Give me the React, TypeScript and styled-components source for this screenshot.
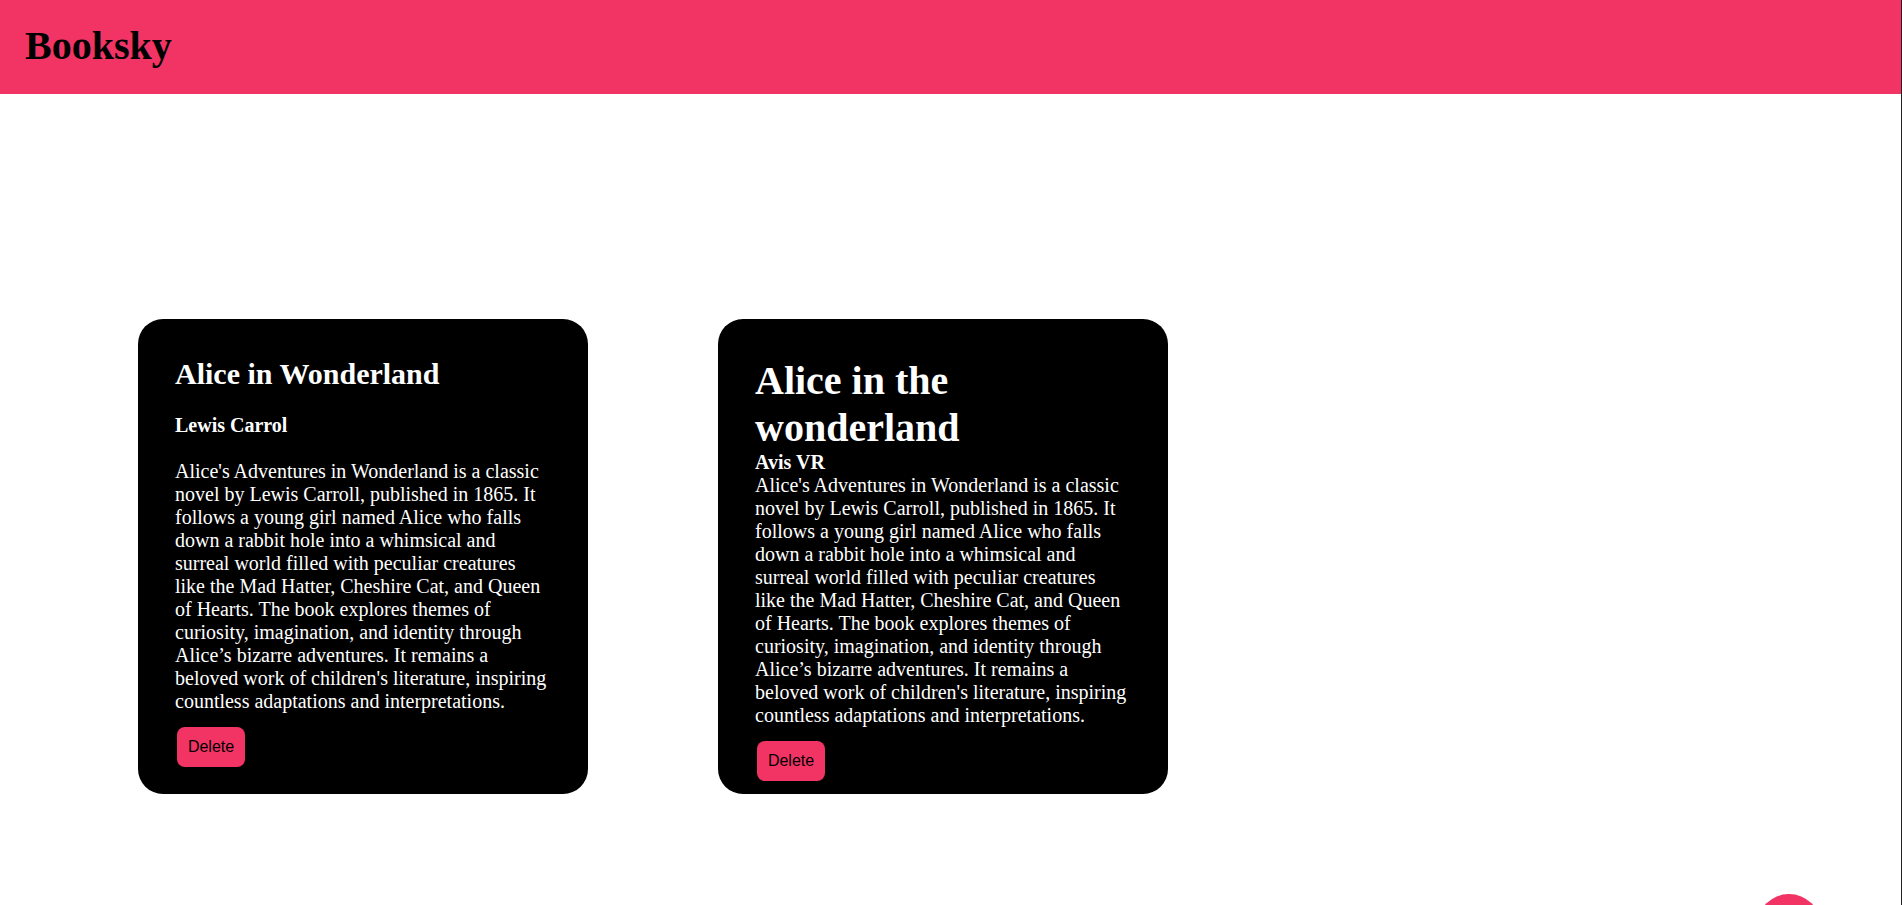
import React from "react";
import styled, { createGlobalStyle } from "styled-components";

const pink = "#f23465";

const GlobalStyle = createGlobalStyle`
  * { box-sizing: border-box; }
  body {
    margin: 0;
    background: #ffffff;
    font-family: "Liberation Serif", "Times New Roman", serif;
    font-size: 20px;
    line-height: 23px;
  }
`;

const Page = styled.div`
  min-height: 100vh;
  border-right: 1px solid #222222;
`;

const Header = styled.header`
  padding: 22px 25px 25px;
  background: ${pink};
  color: #000000;
`;

const Brand = styled.h1`
  margin: 0;
  font-size: 40px;
  line-height: 47px;
`;

const BookList = styled.main`
  display: flex;
  flex-wrap: wrap;
  gap: 130px;
  padding: 225px 138px 0;
`;

const Card = styled.article<{ $gap: number }>`
  display: flex;
  flex-direction: column;
  align-items: flex-start;
  gap: ${({ $gap }) => $gap}px;
  width: 450px;
  min-height: 475px;
  padding: 38px 40px 13px 37px;
  border-radius: 25px;
  background: #000000;
  color: #ffffff;
`;

const Title = styled.h2<{ $large?: boolean }>`
  margin: 0;
  font-size: ${({ $large }) => ($large ? 40 : 30)}px;
  line-height: ${({ $large }) => ($large ? 47 : 34)}px;
`;

const Author = styled.h3`
  margin: 0;
  font-size: 20px;
`;

const Summary = styled.p`
  margin: 0;
`;

const Body = styled.div`
  display: flex;
  flex-direction: column;
  align-items: flex-start;
  gap: 14px;
`;

const DeleteButton = styled.button`
  min-width: 68px;
  height: 40px;
  margin: 0 2px;
  padding: 0 10px;
  border: 0;
  border-radius: 8px;
  background: ${pink};
  color: #000000;
  font-family: "Liberation Sans", Arial, sans-serif;
  font-size: 16px;
  cursor: pointer;
`;

const AddButton = styled.button`
  position: fixed;
  right: 81px;
  bottom: -53px;
  width: 64px;
  height: 64px;
  border: 0;
  border-radius: 50%;
  background: ${pink};
  cursor: pointer;
`;

const summary =
  "Alice's Adventures in Wonderland is a classic novel by Lewis Carroll, published in 1865. It follows a young girl named Alice who falls down a rabbit hole into a whimsical and surreal world filled with peculiar creatures like the Mad Hatter, Cheshire Cat, and Queen of Hearts. The book explores themes of curiosity, imagination, and identity through Alice’s bizarre adventures. It remains a beloved work of children's literature, inspiring countless adaptations and interpretations.";

const books = [
  { title: "Alice in Wonderland", author: "Lewis Carrol", large: false, gap: 23 },
  { title: "Alice in the wonderland", author: "Avis VR", large: true, gap: 0 },
];

export default function App() {
  return (
    <Page>
      <GlobalStyle />
      <Header>
        <Brand>Booksky</Brand>
      </Header>
      <BookList>
        {books.map((book) => (
          <Card key={book.title} $gap={book.gap}>
            <Title $large={book.large}>{book.title}</Title>
            <Author>{book.author}</Author>
            <Body>
              <Summary>{summary}</Summary>
              <DeleteButton type="button">Delete</DeleteButton>
            </Body>
          </Card>
        ))}
      </BookList>
      <AddButton type="button" aria-label="Add book" />
    </Page>
  );
}
